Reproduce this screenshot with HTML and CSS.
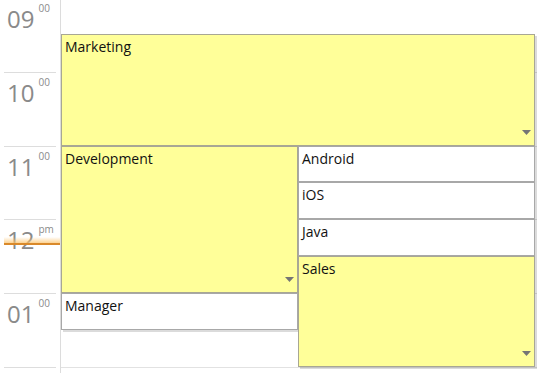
FILE: index.html
```html
<!DOCTYPE html>
<html>
<head>
<meta charset="utf-8">
<link rel="stylesheet" href="styles.css">
</head>
<body>
<div class="cal">
  <div class="gutter">
    <div class="hour"><span class="h">09</span><span class="m">00</span></div>
    <div class="hour"><span class="h">10</span><span class="m">00</span></div>
    <div class="hour"><span class="h">11</span><span class="m">00</span></div>
    <div class="hour"><span class="h">12</span><span class="m">pm</span></div>
    <div class="hour"><span class="h">01</span><span class="m">00</span></div>
    <div class="hour last"></div>
    <div class="now"></div>
  </div>
  <div class="events">
    <div class="slot"></div>
    <div class="slot"></div>
    <div class="slot"></div>
    <div class="slot"></div>
    <div class="slot"></div>
    <div class="slot last"></div>

    <div class="ev yellow" style="top:36px;height:112px;left:0;width:474px">Marketing<svg class="tri" width="9" height="5" viewBox="0 0 9 5"><polygon points="0,0 9,0 4.5,5"/></svg></div>
    <div class="ev yellow" style="top:148px;height:147px;left:0;width:237px">Development<svg class="tri" width="9" height="5" viewBox="0 0 9 5"><polygon points="0,0 9,0 4.5,5"/></svg></div>
    <div class="ev white" style="top:295px;height:37px;left:0;width:237px">Manager</div>
    <div class="ev white" style="top:148px;height:36px;left:237px;width:237px">Android</div>
    <div class="ev white" style="top:184px;height:37px;left:237px;width:237px">iOS</div>
    <div class="ev white" style="top:221px;height:37px;left:237px;width:237px">Java</div>
    <div class="ev yellow" style="top:258px;height:111px;left:237px;width:237px">Sales<svg class="tri" width="9" height="5" viewBox="0 0 9 5"><polygon points="0,0 9,0 4.5,5"/></svg></div>
  </div>
</div>
</body>
</html>
```
FILE: styles.css
```css
html, body {
  margin: 0;
  padding: 0;
  background: #fff;
  overflow: hidden;
}
body {
  width: 537px;
  height: 373px;
  font-family: "Open Sans", "Noto Sans", sans-serif;
}
.cal {
  display: flex;
  margin-top: -2px;
  height: 375px;
  overflow: hidden;
}
.gutter {
  position: relative;
  width: 60px;
  flex: none;
  border-right: 1px solid #dcdcdc;
}
.hour {
  box-sizing: border-box;
  height: 73.75px;
  margin: 0 4px;
  border-top: 1px solid #dddddd;
  padding: 3px 0 0 3px;
  display: flex;
  align-items: flex-start;
  color: #8a8a8a;
}
.hour.last,
.slot.last {
  height: 8px;
}
.h {
  font-size: 24px;
  line-height: 24px;
  margin-top: 5px;
}
.m {
  font-size: 10px;
  line-height: 10px;
  margin-left: 4px;
  margin-top: 1px;
}
.now {
  position: absolute;
  left: 4px;
  right: 0;
  top: 239px;
  height: 6px;
  border-bottom: 2px solid #d9892a;
  background: linear-gradient(to bottom, rgba(255, 214, 150, 0) 0%, rgba(252, 196, 110, 0.75) 100%);
}
.events {
  position: relative;
  flex: 1;
}
.slot {
  box-sizing: border-box;
  height: 73.75px;
  border-top: 1px solid #e2e2e2;
}
.ev {
  position: absolute;
  box-sizing: border-box;
  padding: 2px 3px;
  font-size: 14px;
  line-height: 19px;
  color: #111;
  box-shadow: 2px 2px 0 rgba(0, 0, 0, 0.14);
}
.yellow {
  background: #ffff99;
  border: 1px solid #a8a794;
}
.white {
  background: #ffffff;
  border: 1px solid #a8a8a8;
}
.tri {
  position: absolute;
  right: 3px;
  bottom: 10px;
  fill: #757575;
}
```
